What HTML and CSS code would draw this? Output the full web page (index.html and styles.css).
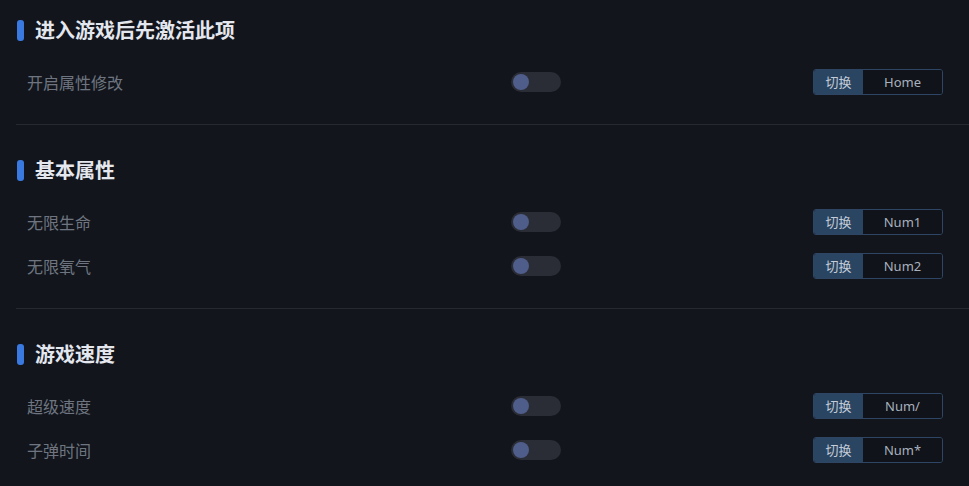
FILE: index.html
```html
<!DOCTYPE html>
<html lang="zh-CN">
<head>
    <meta charset="UTF-8">
    <meta name="viewport" content="width=device-width, initial-scale=1.0">
    <title>修改器</title>
    <link rel="stylesheet" href="styles.css">
</head>
<body>
    <div class="panel">
        <section class="group">
            <h2 class="group-title">进入游戏后先激活此项</h2>
            <div class="row">
                <span class="label">开启属性修改</span>
                <span class="switch"><span class="knob"></span></span>
                <span class="hotkey"><span class="hk-btn">切换</span><span class="hk-key">Home</span></span>
            </div>
        </section>

        <section class="group">
            <h2 class="group-title">基本属性</h2>
            <div class="row">
                <span class="label">无限生命</span>
                <span class="switch"><span class="knob"></span></span>
                <span class="hotkey"><span class="hk-btn">切换</span><span class="hk-key">Num1</span></span>
            </div>
            <div class="row">
                <span class="label">无限氧气</span>
                <span class="switch"><span class="knob"></span></span>
                <span class="hotkey"><span class="hk-btn">切换</span><span class="hk-key">Num2</span></span>
            </div>
        </section>

        <section class="group">
            <h2 class="group-title">游戏速度</h2>
            <div class="row">
                <span class="label">超级速度</span>
                <span class="switch"><span class="knob"></span></span>
                <span class="hotkey"><span class="hk-btn">切换</span><span class="hk-key">Num/</span></span>
            </div>
            <div class="row">
                <span class="label">子弹时间</span>
                <span class="switch"><span class="knob"></span></span>
                <span class="hotkey"><span class="hk-btn">切换</span><span class="hk-key">Num*</span></span>
            </div>
        </section>
    </div>
</body>
</html>
```

FILE: styles.css
```css
body {
    margin: 0;
    background-color: #12151c;
    font-family: "Noto Sans CJK SC", "Noto Sans", sans-serif;
    overflow: hidden;
}
.panel {
    padding-left: 16px;
}
.group {
    padding: 16px 0 20px;
    margin-bottom: 15px;
    border-bottom: 1px solid #252932;
}
.group-title {
    display: flex;
    align-items: center;
    height: 28px;
    margin: 0 0 16px;
    font-size: 20px;
    font-weight: 700;
    color: #e4e7ee;
    line-height: 28px;
}
.group-title::before {
    content: "";
    width: 7px;
    height: 21px;
    border-radius: 3px;
    background-color: #3a79e0;
    margin: 0 11px 0 1px;
}
.row {
    display: grid;
    grid-template-columns: 484px 50px 1fr;
    align-items: center;
    height: 44px;
    padding: 0 26px 0 11px;
}
.label {
    font-size: 16px;
    color: #6f7580;
}
.switch {
    display: flex;
    align-items: center;
    width: 50px;
    height: 20px;
    border-radius: 10px;
    background-color: #2a2d35;
}
.knob {
    width: 16px;
    height: 16px;
    margin-left: 2px;
    border-radius: 50%;
    background-color: #4e5d8a;
}
.hotkey {
    justify-self: end;
    display: flex;
    width: 128px;
    height: 24px;
    border: 1px solid #2e4663;
    border-radius: 3px;
    overflow: hidden;
    font-size: 13px;
    line-height: 24px;
}
.hk-btn {
    width: 49px;
    text-align: center;
    background-color: #2a4562;
    color: #c3ccd8;
}
.hk-key {
    flex: 1;
    text-align: center;
    background-color: #10131a;
    color: #a9b1bd;
    font-family: "Noto Sans", sans-serif;
}
```
